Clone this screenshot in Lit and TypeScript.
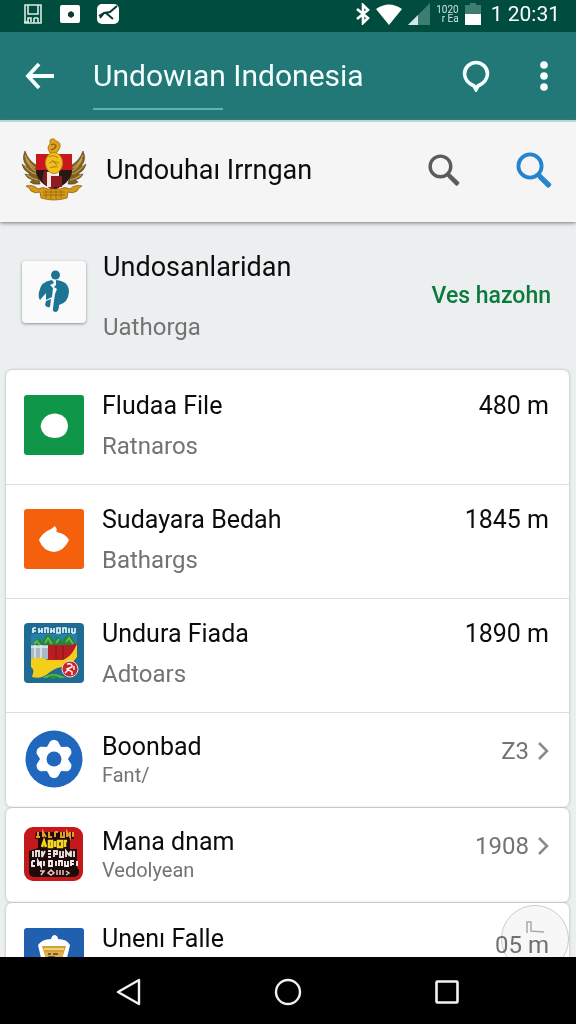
import { LitElement, html, css, svg } from "lit";
import { customElement } from "lit/decorators.js";
import { classMap } from "lit/directives/class-map.js";

interface Item {
  title: string;
  sub: string;
  value: string;
  icon: unknown;
  compact?: boolean;
  muted?: boolean;
  arrow?: boolean;
}

const magnifier = html`<svg class="magnifier" viewBox="0 0 36 36" aria-hidden="true">
  <circle cx="14" cy="14" r="11.6" fill="none" stroke="currentColor" stroke-width="3.8" />
  <path d="M21.5 21.5L25 22.5L35 32.2Q34.5 35 31.8 35.5L22.3 26Z" fill="currentColor" stroke="currentColor" stroke-width="1" />
</svg>`;

const emblem = html`<svg class="emblem" viewBox="0 0 66 64" aria-hidden="true">
  <g fill="#7d6228" stroke="#4e3c16" stroke-width="0.6">
    <path d="M4 13Q7 22 15 27L19 46Q12 47 9 44Q11 42 13 42Q6 41 4 36Q7 37 9 36Q2 32 1 26Q4 29 6 28Q0 22 4 13Z" />
    <path d="M62 13Q59 22 51 27L47 46Q54 47 57 44Q55 42 53 42Q60 41 62 36Q59 37 57 36Q64 32 65 26Q62 29 60 28Q66 22 62 13Z" />
  </g>
  <g stroke="#c9a04a" stroke-width="1.2" fill="none">
    <path d="M4 17Q7 25 14 30M3 27Q8 34 15 36M6 37Q11 41 17 42M5 21Q9 30 15 33" />
    <path d="M62 17Q59 25 52 30M63 27Q58 34 51 36M60 37Q55 41 49 42M61 21Q57 30 51 33" />
  </g>
  <path d="M15 16H51V33Q50 45 33 52Q16 45 15 33Z" fill="#2a1714" />
  <path d="M15 16H51V32H15Z" fill="#c8171e" />
  <path d="M23 33H33V52Q23 48 21 42Z" fill="#7e1c20" />
  <path d="M26 34H38V49H26Z" fill="#f2e8e2" />
  <path d="M30 38H41V49H30Z" fill="#8f1a22" />
  <path d="M29 2Q33 -1 35 3Q40 4 39 9Q38 13 35 15H29Q25 9 29 6Z" fill="#dca31d" stroke="#94670d" stroke-width="0.7" />
  <path d="M30 7Q34 5 35 8Q34 11 30 12" fill="none" stroke="#8a5f0c" stroke-width="1.2" />
  <ellipse cx="33" cy="25" rx="8.5" ry="10.5" fill="#f1c01f" stroke="#c18a10" />
  <path d="M28 19Q33 16 37 20M28 25Q33 22 38 25M29 30Q34 28 37 29M31 22L36 27" fill="none" stroke="#b98510" stroke-width="1.1" />
  <path d="M5 48Q12 46 17 51Q22 48 27 51H39Q44 48 49 51Q54 46 61 48Q57 50 56 53Q52 56 47 54L46 60Q33 64 20 60L19 54Q14 56 10 53Q9 50 5 48Z" fill="#d79a17" stroke="#8d620c" stroke-width="0.8" />
  <path d="M22 57H44M22 54H44M25 52V60M30 52V61M35 52V61M40 52V60" fill="none" stroke="#a06f0e" stroke-width="1" />
</svg>`;

const personIcon = html`<svg viewBox="0 0 32 44" width="32" height="44" aria-hidden="true">
  <g fill="#1d7596">
    <circle cx="17.500" cy="5" r="4.500" />
    <path d="M14 10Q3 11 1 22Q0 27 2 30L8 23V30L14 27L15 18L12 15L16 13Z" />
    <path d="M18 10Q31 11 31 22Q30 33 21 35Q21 41 18 42Q14 42 15 38L17 24L19 19L16 17L18 15Z" />
    <path d="M8 31L13 29L12 37Q9 38 7 35Z" />
  </g>
</svg>`;

const blobIcon = html`<svg viewBox="0 0 60 60" width="60" height="60" aria-hidden="true">
  <rect width="60" height="60" rx="3" fill="#109648" />
  <path d="M30 18.500Q43 19 44 31Q43 43 30 43Q18 42 16.500 31Q18 20 30 18.500Z" fill="#fff" />
</svg>`;

const flameIcon = html`<svg viewBox="0 0 60 60" width="60" height="60" aria-hidden="true">
  <rect width="60" height="60" rx="3" fill="#f4600c" />
  <path d="M31 17Q33 19 32.500 23Q41 24 45 31Q40 42 30 43Q19 42 15 31Q17 26 23 22Q28 20 31 17Z" fill="#fff" />
</svg>`;

const landscapeIcon = html`<svg viewBox="0 0 60 60" width="60" height="60" aria-hidden="true">
  <rect width="60" height="60" rx="4" fill="#1f6b93" />
  <rect x="7" y="11" width="46" height="12" fill="#2382a8" />
  <path d="M9 5V10M9 5H12M9 8H12M15 5V10M18 5V10M15 8H18M21 10V5H24V10M27 5V10M30 5V10M27 8H30M33 5V10H36V5ZM39 10V5H42V10M45 5V10M48 5V10M51 5V10M48 10H51" fill="none" stroke="#e4f2f6" stroke-width="1.700" />
  <path d="M7 23L13 16Q16 15 18 20Q21 12 24 12Q28 13 30 19Q32 13 35 14L38 19Q41 12 45 12Q48 13 52 22V28H7Z" fill="#25843c" />
  <path d="M10 21L13 18L16 22M21 20L24 15L28 21M32 20L35 16M42 19L45 15L49 21" fill="none" stroke="#65b64b" stroke-width="2" />
  <rect x="7" y="22" width="24" height="14" fill="#a6b9c4" />
  <path d="M7 24H31M11 22V35M17 22V35" stroke="#e3ebef" stroke-width="1.500" />
  <path d="M24 22H48L53 20V30Q47 36 42 37H24Z" fill="#b91d24" />
  <path d="M32 23V36M39 23V36" stroke="#801219" stroke-width="1" />
  <path d="M7 36Q15 33 24 37H39Q46 34 50 27L53 21V34L45 44Q34 43 26 49Q17 57 8 54Q11 46 7 44Z" fill="#f4ce19" />
  <path d="M18 55Q29 47 42 55Z" fill="#55b33c" />
  <path d="M23 56Q29 51 36 56" fill="none" stroke="#1d7c35" stroke-width="1.5" />
  <circle cx="46" cy="46" r="8" fill="#c9252b" stroke="#f7dcd8" stroke-width="1" />
  <path d="M43 41Q49 40 48 44L43 46L48 49V52M41 50L45 46M50 43V47" fill="none" stroke="#fff" stroke-width="1.4" />
</svg>`;

const gearTeeth = [0, 60, 120, 180, 240, 300];
const gearIcon = html`<svg viewBox="0 0 60 60" width="60" height="60" aria-hidden="true">
  <circle cx="30" cy="30" r="28.500" fill="#1f68bd" />
  <circle cx="30" cy="30" r="14" fill="#fff" />
  ${gearTeeth.map((a) => svg`<path d="M23 19L26.500 12.500Q30 10 33.500 12.500L37 19Z" fill="#fff" stroke="#fff" stroke-width="1" transform=${`rotate(${a} 30 30)`} />`)}
  <circle cx="30" cy="30" r="7.500" fill="#1f68bd" />
</svg>`;

const posterIcon = html`<svg viewBox="0 0 60 54" width="60" height="54" aria-hidden="true">
  <rect width="59" height="54" rx="9" fill="#c5181a" />
  <path d="M12 5H50V12H46V22H53V40L55 43V46Q54 50 49 50H11Q6 50 5 46V24L14 21V12H11Z" fill="#1d0b0b" />
  <path d="M12 10H16M14 5V10M19 10V5L22 10M25 5V10H28M31 5V10M31 5H34M37 5V10H40V5M43 10V5L46 10V5M49 5V10" fill="none" stroke="#e59b24" stroke-width="2" />
  <path d="M18 20L20 14L22 20M25 14V20H28V14ZM31 14V20M34 14V20H38V14ZM41 20V14H43" fill="none" stroke="#f6d51f" stroke-width="2.600" />
  <path d="M9 24V30M12 30V24H15V30M18 24V30L21 24M24 24H27M24 27H27M24 30H27M30 30V24H33V27H30M36 24V30H39V24M42 30V24L45 28L47 24V30M50 24V30" fill="none" stroke="#e9dede" stroke-width="1.900" />
  <path d="M8 34V39H11M8 34H11M14 39V34L17 39V34M20 34V39M25 34V39H28V34ZM32 34V39M35 39V34H38V39M41 34V39H44V34M47 39V34H50M47 37H50M53 34V39" fill="none" stroke="#f3eaea" stroke-width="1.900" />
  <path d="M16 44H20L17 48M24 46L27 43L30 46L27 48ZM33 43V48M36 43V48M39 43V48M42 44L45 46L42 48" fill="none" stroke="#e7c5c0" stroke-width="1.500" />
</svg>`;

const lanternIcon = html`<svg viewBox="0 0 60 60" width="60" height="60" aria-hidden="true">
  <rect width="60" height="60" rx="3" fill="#2060ae" />
  <path d="M27 11Q28 7 31 7Q34 8 34 11Q43 11 46 17Q44 26 42 34V50H18V34L14 17Q18 11 27 11Z" fill="#fff" />
  <path d="M18 18H42L38 31H22Z" fill="#d5a03a" />
  <path d="M20 21H40" stroke="#f0cf79" stroke-width="2" />
  <path d="M21 24H39V46H21Z" fill="#e0b04c" />
  <path d="M24 26H27M24 29H31M29 26H34" stroke="#4c4433" stroke-width="1.500" />
</svg>`;

const mainItems: Item[] = [
  { title: "Fludaa File", sub: "Ratnaros", value: "480 m", icon: blobIcon },
  { title: "Sudayara Bedah", sub: "Bathargs", value: "1845 m", icon: flameIcon },
  { title: "Undura Fiada", sub: "Adtoars", value: "1890 m", icon: landscapeIcon },
  { title: "Boonbad", sub: "Fant/", value: "Z3", icon: gearIcon, compact: true, muted: true, arrow: true },
];
const groups: Item[][] = [
  mainItems,
  [{ title: "Mana dnam", sub: "Vedolyean", value: "1908", icon: posterIcon, compact: true, muted: true, arrow: true }],
  [{ title: "Unenı Falle", sub: "", value: "05 m", icon: lanternIcon, muted: true }],
];

@customElement("app-root")
export class AppRoot extends LitElement {
  static styles = css`
    :host {
      display: flex;
      flex-direction: column;
      height: 100vh;
      overflow: hidden;
      background: #eceff0;
      color: #0c0c0c;
      font-family: Roboto, "Liberation Sans", sans-serif;
    }
    * { box-sizing: border-box; }
    svg { display: block; flex: none; }
    button {
      display: flex;
      align-items: center;
      justify-content: center;
      padding: 0;
      border: 0;
      background: none;
      color: inherit;
      font: inherit;
      cursor: pointer;
    }
    .status {
      flex: none;
      display: flex;
      justify-content: space-between;
      align-items: center;
      height: 32px;
      padding: 0 16px 4px 23px;
      background: #004c3e;
      color: #fff;
    }
    .cluster { display: flex; align-items: center; }
    .notices { gap: 17px; }
    .signals { gap: 6px; }
    .rate { font-size: 10px; line-height: 9px; text-align: right; color: #cfe3de; }
    .rate span { display: block; }
    .clock { font-size: 21px; line-height: 24px; white-space: nowrap; margin-left: 4px; }
    .appbar {
      flex: none;
      display: flex;
      align-items: center;
      height: 88px;
      padding: 0 8px 0 16px;
      background: #217876;
      color: #f4ffff;
    }
    .appbar button { width: 48px; height: 48px; }
    .heading {
      flex: 1;
      display: grid;
      justify-items: start;
      margin: 0 0 0 29px;
      padding-top: 16px;
      gap: 14px;
      font-size: 30px;
      line-height: 36px;
      font-weight: 400;
      white-space: nowrap;
    }
    .heading::after { content: ""; width: 130px; height: 2px; background: #5cb3b3; }
    .appbar .more { margin-left: 20px; }
    .search {
      position: relative;
      flex: none;
      display: flex;
      align-items: center;
      height: 102px;
      padding: 0 18px 4px 21px;
      background: #f5f5f5;
      border-top: 2px solid #b4d9d9;
      box-shadow: 0 1px 4px #777;
    }
    .emblem { width: 66px; height: 64px; }
    .search input {
      flex: 1;
      min-width: 0;
      margin-left: 19px;
      padding: 0;
      border: 0;
      outline: 0;
      background: none;
      color: #0c0c0c;
      font: 27px/36px Roboto, "Liberation Sans", sans-serif;
    }
    .search button { width: 48px; height: 48px; color: #5b5b5b; }
    .search .go { margin-left: 42px; color: #2384cf; }
    .magnifier { width: 32px; height: 32px; }
    .go .magnifier { width: 36px; height: 36px; }
    .content { position: relative; flex: 1; min-height: 0; overflow: hidden; }
    .featured {
      display: grid;
      grid-template-columns: 64px 1fr auto;
      column-gap: 17px;
      align-items: center;
      height: 148px;
      padding: 0 25px 0 22px;
    }
    .badge {
      display: flex;
      align-items: center;
      justify-content: center;
      width: 64px;
      height: 62px;
      border-radius: 4px;
      background: #fafafa;
      box-shadow: 0 1px 3px #8a8f90;
      margin-bottom: 8px;
    }
    .featured .text { gap: 30px; }
    .featured .title { font-size: 27px; }
    .link { color: #0b7a3c; font-size: 23px; line-height: 28px; font-weight: 500; text-decoration: none; }
    .group {
      list-style: none;
      margin: 0 7px 1px 6px;
      padding: 0;
      border-radius: 6px;
      background: #fff;
      box-shadow: 0 0 3px #a9adae;
    }
    .row {
      display: grid;
      grid-template-columns: 60px 1fr auto;
      column-gap: 18px;
      align-items: center;
      padding: 20px 20px 24px 18px;
    }
    .row + .row { border-top: 1px solid #dcdedf; padding-top: 19px; }
    .row.compact { padding-top: 16px; padding-bottom: 18px; min-height: 94px; }
    .text { display: grid; gap: 10px; }
    .row .text { min-height: 70px; align-content: start; }
    .row.compact .text { gap: 0; min-height: 0; }
    .title { margin: 0; font-size: 25px; line-height: 32px; font-weight: 400; white-space: nowrap; }
    .sub { margin: 0; font-size: 24px; line-height: 28px; color: #737373; }
    .compact .sub { font-size: 20px; line-height: 24px; }
    .value {
      display: flex;
      align-items: center;
      gap: 8px;
      align-self: start;
      font-size: 25px;
      line-height: 32px;
      white-space: nowrap;
    }
    .muted .value { padding-top: 10px; font-size: 24px; line-height: 24px; color: #747474; }
    .fab {
      position: absolute;
      right: 7px;
      bottom: -16px;
      align-items: flex-start;
      width: 68px;
      height: 68px;
      padding-top: 14px;
      border: 1px solid #cbcbcb;
      border-radius: 50%;
      background: #f1f1f199;
      mix-blend-mode: multiply;
    }
    .nav {
      flex: none;
      display: flex;
      align-items: center;
      justify-content: center;
      gap: 111px;
      height: 67px;
      padding: 3px 0 0;
      background: #000;
      color: #f2f2f2;
    }
    .nav button { width: 48px; height: 48px; }
  `;

  private row(item: Item) {
    return html`<li class=${classMap({ row: true, compact: !!item.compact, muted: !!item.muted })}>
      ${item.icon}
      <div class="text">
        <h2 class="title">${item.title}</h2>
        ${item.sub ? html`<p class="sub">${item.sub}</p>` : null}
      </div>
      <div class="value">
        ${item.value}
        ${item.arrow
          ? html`<svg viewBox="0 0 12 20" width="12" height="20" aria-hidden="true"><path d="M2 2L10 10L2 18" fill="none" stroke="#8a8a8a" stroke-width="2.500" /></svg>`
          : null}
      </div>
    </li>`;
  }

  render() {
    return html`
      <div class="status">
        <div class="cluster notices">
          <svg viewBox="0 0 20 20" width="20" height="20" aria-hidden="true">
            <path d="M2 1H18V19H2Z M5 1V10H15V1M1 18H6M5 19V14H8V18M11 14V19M15 14V19M11 14H15" fill="none" stroke="#d8ebe5" stroke-width="1.600" />
          </svg>
          <svg viewBox="0 0 20 20" width="20" height="20" aria-hidden="true">
            <rect y="1" width="20" height="18" rx="2" fill="#fff" />
            <path d="M8 9L11 7L14 9V12L11 14L8 12Z" fill="#0b3b31" />
          </svg>
          <svg viewBox="0 0 22 20" width="22" height="20" aria-hidden="true">
            <rect width="22" height="20" rx="5" fill="#fff" />
            <path d="M2 12L7 9L13 8L20 2M9 9L16 15M3 14L7 9" fill="none" stroke="#0b3b31" stroke-width="2" />
          </svg>
        </div>
        <div class="cluster signals">
          <svg viewBox="0 0 14 22" width="14" height="22" aria-hidden="true">
            <path d="M1 6L12 15L7 20V2L12 7L1 16" fill="none" stroke="#fff" stroke-width="2.600" />
          </svg>
          <svg viewBox="0 0 26 21" width="26" height="21" aria-hidden="true">
            <path d="M0 5Q13 -4 26 5L13 21Z" fill="#fff" />
          </svg>
          <svg viewBox="0 0 22 22" width="22" height="22" aria-hidden="true">
            <path d="M22 0V22H0Z" fill="#3d7d71" />
            <path d="M10 12V22H0Z" fill="#d5e7e3" />
          </svg>
          <div class="rate"><span>1020</span><span>r Ea</span></div>
          <svg viewBox="0 0 16 22" width="16" height="22" aria-hidden="true">
            <path d="M5 0H11V2H16V12H0V2H5Z" fill="#3d7d71" />
            <path d="M0 11H16V22H0Z" fill="#fff" />
          </svg>
          <div class="clock">1 20:31</div>
        </div>
      </div>

      <header class="appbar">
        <button aria-label="Back">
          <svg viewBox="0 0 30 28" width="30" height="28" aria-hidden="true">
            <path d="M14 2L3 14L14 26M3 14H29" fill="none" stroke="currentColor" stroke-width="3.800" />
          </svg>
        </button>
        <h1 class="heading">Undowıan Indonesia</h1>
        <button aria-label="Places">
          <svg viewBox="0 0 28 32" width="28" height="32" aria-hidden="true">
            <path d="M14 2.500A11.500 11.500 0 0 1 25.500 14Q25 22 16 26L14 29.500L12 26Q3 22 2.500 14A11.500 11.500 0 0 1 14 2.500Z" fill="none" stroke="currentColor" stroke-width="3.600" />
          </svg>
        </button>
        <button class="more" aria-label="More options">
          <svg viewBox="0 0 8 30" width="8" height="30" aria-hidden="true">
            <g fill="currentColor"><circle cx="4" cy="4" r="3.800" /><circle cx="4" cy="15" r="3.800" /><circle cx="4" cy="26" r="3.800" /></g>
          </svg>
        </button>
      </header>

      <form class="search" @submit=${(e: Event) => e.preventDefault()}>
        ${emblem}
        <input type="text" aria-label="Search" value="Undouhaı Irrngan" />
        <button type="button" aria-label="Find">${magnifier}</button>
        <button class="go" type="submit" aria-label="Search">${magnifier}</button>
      </form>

      <main class="content">
        <section class="featured">
          <div class="badge">${personIcon}</div>
          <div class="text">
            <h2 class="title">Undosanlaridan</h2>
            <p class="sub">Uathorga</p>
          </div>
          <a class="link" href="#">Ves hazohn</a>
        </section>
        ${groups.map((g) => html`<ul class="group">${g.map((i) => this.row(i))}</ul>`)}
        <button class="fab" aria-label="History">
          <svg viewBox="0 0 20 14" width="20" height="14" aria-hidden="true">
            <path d="M2 13V2H6V11L19 12" fill="none" stroke="#aaa" stroke-width="1.500" />
          </svg>
        </button>
      </main>

      <nav class="nav">
        <button aria-label="Back">
          <svg viewBox="0 0 26 28" width="26" height="28" aria-hidden="true">
            <path d="M23 2V26L2 14Z" fill="none" stroke="currentColor" stroke-width="2.400" stroke-linejoin="round" />
          </svg>
        </button>
        <button aria-label="Home">
          <svg viewBox="0 0 28 28" width="28" height="28" aria-hidden="true">
            <circle cx="14" cy="14" r="12" fill="none" stroke="currentColor" stroke-width="2.400" />
          </svg>
        </button>
        <button aria-label="Recent apps">
          <svg viewBox="0 0 24 24" width="24" height="24" aria-hidden="true">
            <rect x="1.500" y="1.500" width="21" height="21" rx="1" fill="none" stroke="currentColor" stroke-width="2.600" />
          </svg>
        </button>
      </nav>
    `;
  }
}
